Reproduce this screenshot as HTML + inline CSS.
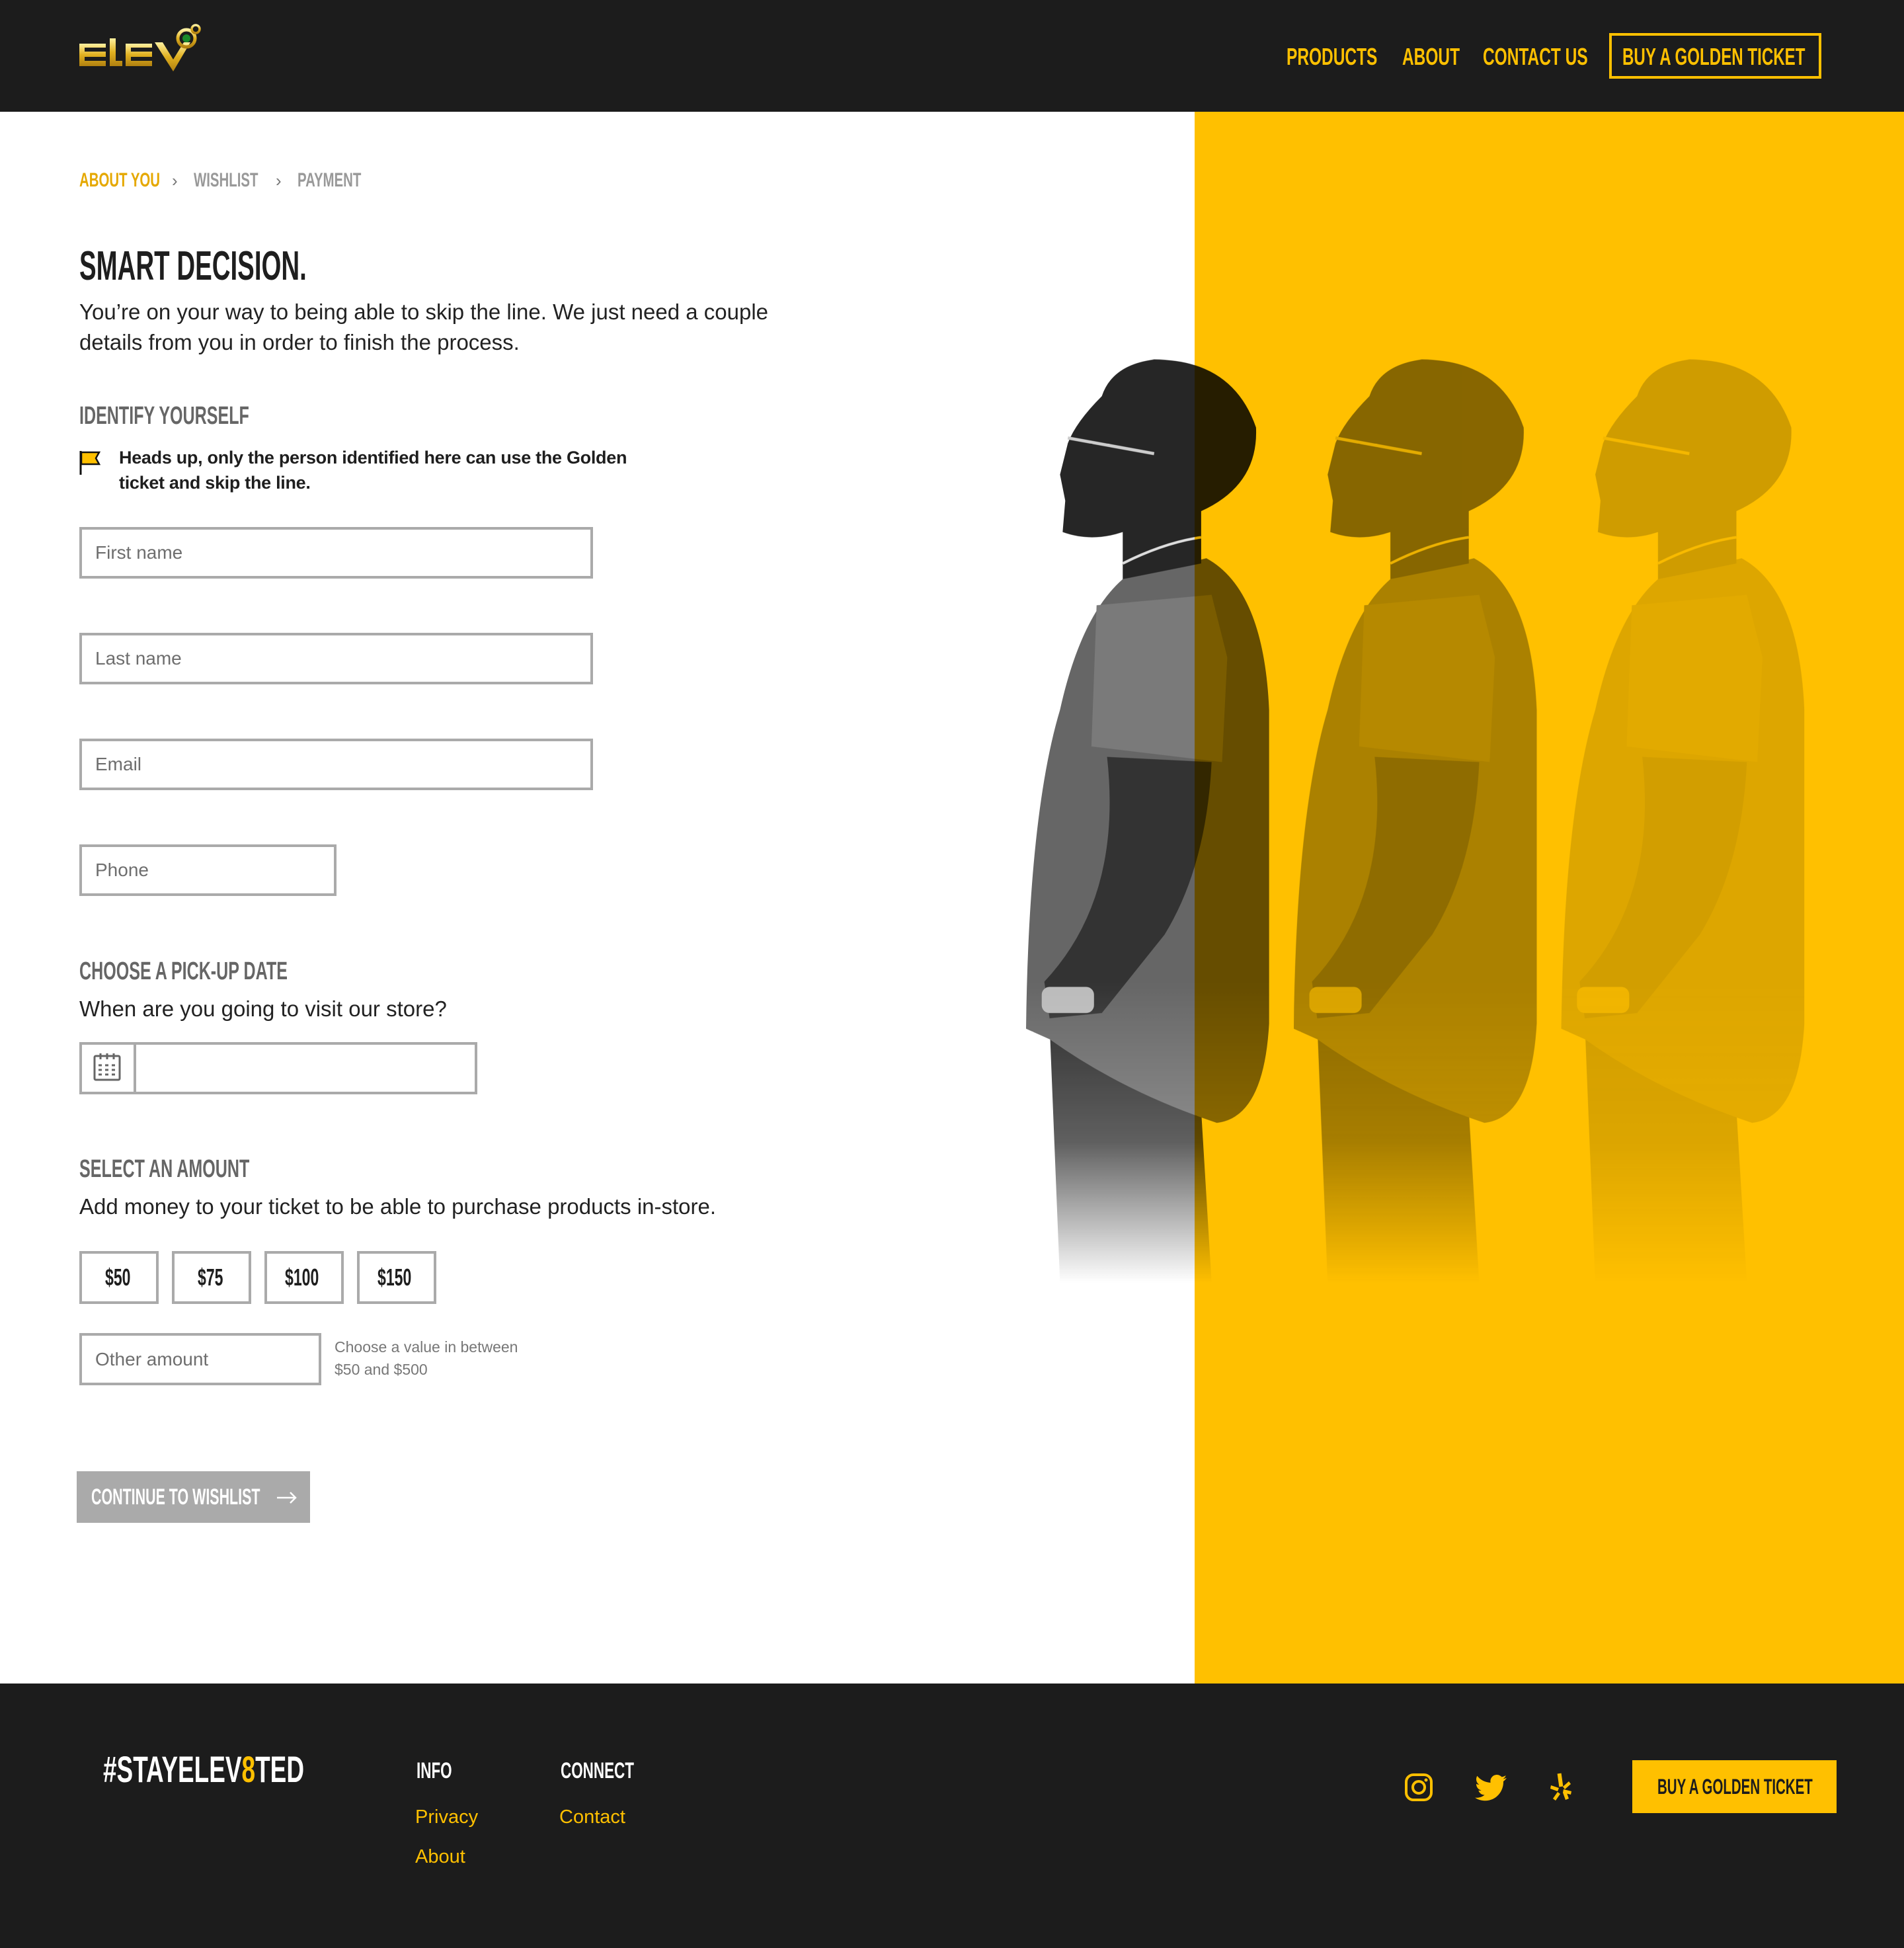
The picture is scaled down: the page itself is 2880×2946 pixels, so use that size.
<!DOCTYPE html>
<html><head><meta charset="utf-8">
<style>
*{margin:0;padding:0;box-sizing:border-box}
body{width:2880px;height:2946px;position:relative;background:#fff;font-family:"Liberation Sans",sans-serif;overflow:hidden}
.a{position:absolute;white-space:nowrap}
.c{display:inline-block;transform:scaleX(.66);transform-origin:0 50%;font-weight:bold;white-space:nowrap}
.box{position:absolute;border:4px solid #aaa;background:#fff}
.ph{position:absolute;left:20px;top:50%;transform:translateY(-50%);font-size:28px;color:#6e6e6e}
.body{font-size:33px;color:#222}
.h3{font-size:38px;color:#666}
.gold{color:#FFC000}
</style></head><body>
<!-- header -->
<div class="a" style="left:0;top:0;width:2880px;height:169px;background:#1c1c1c"></div>
<svg class="a" style="left:118px;top:36px" width="192" height="76" viewBox="0 0 192 76">
<defs><linearGradient id="g" x1="0" y1="0" x2="0" y2="1"><stop offset="0" stop-color="#fff1a0"/><stop offset=".5" stop-color="#e0b020"/><stop offset="1" stop-color="#b08010"/></linearGradient></defs>
<g fill="url(#g)">
<path d="M2 30h40v6H10v6h32v8H2z M2 36h8v20h32v8H2z"/>
<path d="M48 22h9v34h10v8H48z"/>
<path d="M72 30h40v6H80v6h32v8H72z M72 36h8v20h32v8H72z"/>
<path d="M116 28l12 0 16 26 16-26 10 0-26 44z"/>
</g>
<circle cx="164" cy="22" r="13" fill="none" stroke="url(#g)" stroke-width="5"/>
<circle cx="164" cy="22" r="6" fill="#1a8a2a"/>
<circle cx="178" cy="8" r="6" fill="none" stroke="url(#g)" stroke-width="3.5"/>
</svg>
<div class="a gold" style="left:1946px;top:64px;font-size:36px;line-height:44px"><span class="c" style="transform:scaleX(.68)">PRODUCTS</span></div>
<div class="a gold" style="left:2121px;top:64px;font-size:36px;line-height:44px"><span class="c" style="transform:scaleX(.68)">ABOUT</span></div>
<div class="a gold" style="left:2243px;top:64px;font-size:36px;line-height:44px"><span class="c" style="transform:scaleX(.68)">CONTACT US</span></div>
<div class="a" style="left:2434px;top:50px;width:321px;height:69px;border:4px solid #FFC000"></div>
<div class="a gold" style="left:2454px;top:64px;font-size:36px;line-height:44px"><span class="c" style="transform:scaleX(.67)">BUY A GOLDEN TICKET</span></div>

<!-- figures -->
<svg class="a" style="left:1540px;top:520px" width="1240" height="1420" viewBox="0 0 1568 1796">
<defs>
<linearGradient id="fade" gradientUnits="userSpaceOnUse" x1="0" y1="0" x2="0" y2="1796"><stop offset=".68" stop-color="#fff"/><stop offset=".85" stop-color="#fff" stop-opacity="0.75"/><stop offset="1" stop-color="#fff" stop-opacity="0"/></linearGradient>
<mask id="m" maskUnits="userSpaceOnUse" x="0" y="0" width="1568" height="1796"><rect width="1568" height="1796" fill="url(#fade)"/></mask>
<g id="fig">
<path d="M60,1300 L340,1300 L370,1796 L80,1796 Z" fill="#2a2a2a"/>
<path d="M200,450 L360,410 Q470,470 480,700 L480,1300 Q470,1480 380,1490 Q200,1430 60,1330 L15,1310 Q20,900 80,700 Q120,520 200,450 Z" fill="#666"/>
<path d="M150,500 L370,480 L400,600 L390,800 L140,770 Z" fill="#7a7a7a"/>
<path d="M170,790 L370,800 Q360,1000 280,1130 L160,1280 L60,1290 L50,1220 Q200,1060 170,790 Z" fill="#333"/>
<path d="M160,100 Q110,150 95,190 L80,250 L90,300 L85,360 Q140,380 200,360 L200,450 L350,420 L350,320 Q460,270 455,160 Q410,30 260,30 Q180,40 160,100 Z" fill="#262626"/>
<path d="M95,180 L260,210" stroke="#ccc" stroke-width="6"/>
<path d="M200,420 Q280,380 350,370" stroke="#ddd" stroke-width="5" fill="none"/>
<rect x="45" y="1230" width="100" height="50" rx="15" fill="#bbb"/>
</g>
</defs>
<g mask="url(#m)">
<use href="#fig"/>
<use href="#fig" x="512" opacity=".55"/>
<use href="#fig" x="1024" opacity=".22"/>
</g>
</svg>
<div class="a" style="left:1807px;top:169px;width:1073px;height:2377px;background:#FFC000;mix-blend-mode:multiply"></div>

<!-- breadcrumb -->
<div class="a" style="left:120px;top:255px;font-size:30px;line-height:36px;color:#E5A800"><span class="c" style="transform:scaleX(.68)">ABOUT YOU</span></div>
<div class="a" style="left:260px;top:255px;font-size:26px;line-height:36px;color:#777">›</div>
<div class="a" style="left:293px;top:255px;font-size:30px;line-height:36px;color:#999"><span class="c" style="transform:scaleX(.68)">WISHLIST</span></div>
<div class="a" style="left:417px;top:255px;font-size:26px;line-height:36px;color:#777">›</div>
<div class="a" style="left:450px;top:255px;font-size:30px;line-height:36px;color:#999"><span class="c" style="transform:scaleX(.68)">PAYMENT</span></div>

<div class="a" style="left:120px;top:368px;font-size:62px;line-height:70px;color:#1e1e1e"><span class="c" style="transform:scaleX(.62)">SMART DECISION.</span></div>
<div class="a body" style="left:120px;top:449px;line-height:46px">You’re on your way to being able to skip the line. We just need a couple<br>details from you in order to finish the process.</div>

<div class="a h3" style="left:120px;top:606px;line-height:46px"><span class="c" style="transform:scaleX(.66)">IDENTIFY YOURSELF</span></div>
<svg class="a" style="left:120px;top:680px" width="34" height="40" viewBox="0 0 34 40"><path d="M2 2 V38" stroke="#111" stroke-width="3"/><path d="M3 4 H30 L25 13 L30 22 H3 Z" fill="#FFC000" stroke="#111" stroke-width="2.5"/></svg>
<div class="a" style="left:180px;top:673px;font-size:27px;line-height:38px;font-weight:bold;color:#1e1e1e;letter-spacing:-.3px">Heads up, only the person identified here can use the Golden<br>ticket and skip the line.</div>

<div class="box" style="left:120px;top:797px;width:777px;height:78px"><span class="ph">First name</span></div>
<div class="box" style="left:120px;top:957px;width:777px;height:78px"><span class="ph">Last name</span></div>
<div class="box" style="left:120px;top:1117px;width:777px;height:78px"><span class="ph">Email</span></div>
<div class="box" style="left:120px;top:1277px;width:389px;height:78px"><span class="ph">Phone</span></div>

<div class="a h3" style="left:120px;top:1446px;line-height:46px"><span class="c" style="transform:scaleX(.66)">CHOOSE A PICK-UP DATE</span></div>
<div class="a body" style="left:120px;top:1503px;line-height:46px">When are you going to visit our store?</div>
<div class="box" style="left:120px;top:1576px;width:602px;height:79px"></div>
<div class="a" style="left:202px;top:1576px;width:4px;height:79px;background:#aaa"></div>
<svg class="a" style="left:140px;top:1590px" width="46" height="50" viewBox="0 0 46 50"><rect x="3" y="7" width="38" height="36" rx="2" fill="none" stroke="#666" stroke-width="3"/><g stroke="#666" stroke-width="3"><path d="M12 3v9M22 3v9M32 3v9"/><path d="M9 21h5M19 21h5M29 21h5M9 28h5M19 28h5M29 28h5M9 35h5M19 35h5M29 35h5"/></g></svg>

<div class="a h3" style="left:120px;top:1745px;line-height:46px"><span class="c" style="transform:scaleX(.66)">SELECT AN AMOUNT</span></div>
<div class="a body" style="left:120px;top:1802px;line-height:46px">Add money to your ticket to be able to purchase products in-store.</div>
<div class="box" style="left:120px;top:1892px;width:120px;height:80px"></div>
<div class="box" style="left:260px;top:1892px;width:120px;height:80px"></div>
<div class="box" style="left:400px;top:1892px;width:120px;height:80px"></div>
<div class="box" style="left:540px;top:1892px;width:120px;height:80px"></div>
<div class="a" style="left:159px;top:1912px;font-size:36px;line-height:40px;color:#1e1e1e"><span class="c" style="transform:scaleX(.64)">$50</span></div>
<div class="a" style="left:299px;top:1912px;font-size:36px;line-height:40px;color:#1e1e1e"><span class="c" style="transform:scaleX(.64)">$75</span></div>
<div class="a" style="left:431px;top:1912px;font-size:36px;line-height:40px;color:#1e1e1e"><span class="c" style="transform:scaleX(.64)">$100</span></div>
<div class="a" style="left:571px;top:1912px;font-size:36px;line-height:40px;color:#1e1e1e"><span class="c" style="transform:scaleX(.64)">$150</span></div>
<div class="box" style="left:120px;top:2016px;width:366px;height:79px"><span class="ph">Other amount</span></div>
<div class="a" style="left:506px;top:2020px;font-size:23px;line-height:34px;color:#777">Choose a value in between<br>$50 and $500</div>

<div class="a" style="left:116px;top:2225px;width:353px;height:78px;background:#aaa"></div>
<div class="a" style="left:138px;top:2244px;font-size:34px;line-height:40px;color:#fff"><span class="c" style="transform:scaleX(.63)">CONTINUE TO WISHLIST</span></div>
<svg class="a" style="left:418px;top:2255px" width="32" height="20" viewBox="0 0 32 20"><path d="M1 10H29M21 2l8 8-8 8" stroke="#fff" stroke-width="2.5" fill="none"/></svg>

<!-- footer -->
<div class="a" style="left:0;top:2546px;width:2880px;height:400px;background:#1c1c1c"></div>
<div class="a" style="left:156px;top:2646px;font-size:56px;line-height:60px;color:#fff"><span class="c" style="transform:scaleX(.66)">#STAYELEV<span style="color:#FFC000">8</span>TED</span></div>
<div class="a" style="left:630px;top:2658px;font-size:34px;line-height:40px;color:#fff"><span class="c" style="transform:scaleX(.66)">INFO</span></div>
<div class="a" style="left:848px;top:2658px;font-size:34px;line-height:40px;color:#fff"><span class="c" style="transform:scaleX(.66)">CONNECT</span></div>
<div class="a gold" style="left:628px;top:2730px;font-size:29px;line-height:36px">Privacy</div>
<div class="a gold" style="left:628px;top:2790px;font-size:29px;line-height:36px">About</div>
<div class="a gold" style="left:846px;top:2730px;font-size:29px;line-height:36px">Contact</div>
<svg class="a" style="left:2124px;top:2681px" width="44" height="44" viewBox="0 0 44 44"><rect x="3" y="3" width="38" height="38" rx="11" fill="none" stroke="#FFC000" stroke-width="4"/><circle cx="22" cy="22" r="9" fill="none" stroke="#FFC000" stroke-width="4"/><circle cx="33" cy="11" r="2.5" fill="#FFC000"/></svg>
<svg class="a" style="left:2230px;top:2684px" width="50" height="40" viewBox="0 0 24 20"><path fill="#FFC000" d="M24 2.4c-.9.4-1.8.7-2.8.8 1-.6 1.8-1.6 2.2-2.7-1 .6-2 1-3.1 1.2C19.3.7 18 0 16.6 0c-2.7 0-4.9 2.2-4.9 4.9 0 .4 0 .8.1 1.1C7.7 5.8 4.1 3.900 1.7.9c-.4.7-.7 1.6-.7 2.5 0 1.7.9 3.2 2.2 4.1-.8 0-1.6-.2-2.2-.6v.1c0 2.4 1.7 4.4 3.9 4.8-.4.1-.8.2-1.3.2-.3 0-.6 0-.9-.1.6 2 2.4 3.4 4.6 3.4-1.7 1.3-3.8 2.1-6.1 2.1-.4 0-.8 0-1.2-.1C2.2 18.8 4.8 19.6 7.5 19.6c9.1 0 14-7.5 14-14v-.6c1-.7 1.800-1.6 2.5-2.6z"/></svg>
<svg class="a" style="left:2342px;top:2680px" width="40" height="46" viewBox="0 0 40 46"><g fill="#FFC000"><path d="M15 2h6v20h-6z" transform="rotate(-8 18 12)"/><path d="M4 20l12 4-2 5-11-4z"/><path d="M23 26l12 3-1 5-12-3z"/><path d="M22 22l9-8 3 4-9 8z"/><path d="M14 30l-7 10 4 3 7-10z"/><path d="M22 31l4 11 5-2-4-11z"/></g></svg>
<div class="a" style="left:2469px;top:2662px;width:309px;height:80px;background:#FFC000"></div>
<div class="a" style="left:2507px;top:2682px;font-size:32px;line-height:40px;color:#1c1c1c"><span class="c" style="transform:scaleX(.64)">BUY A GOLDEN TICKET</span></div>
</body></html>
